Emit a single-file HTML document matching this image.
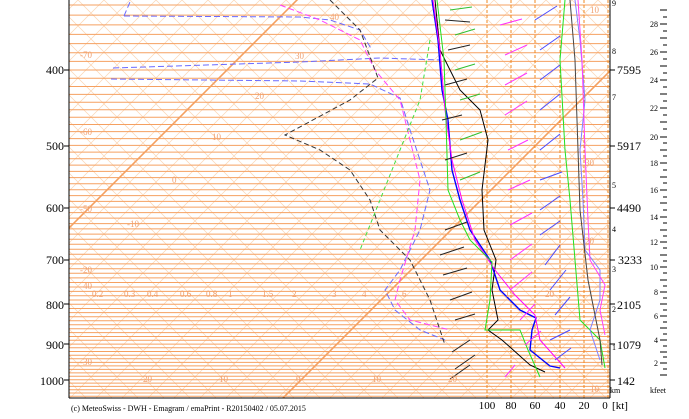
<!DOCTYPE html><html><head><meta charset="utf-8"><style>
body{margin:0;background:#fff;width:689px;height:419px;overflow:hidden;font-family:"Liberation Serif",serif}
svg{position:absolute;left:0;top:0}
</style></head><body>
<svg width="689" height="419" viewBox="0 0 689 419">
<defs>
<clipPath id="c"><rect x="69" y="0" width="541" height="398"/></clipPath>
<pattern id="hp" patternUnits="userSpaceOnUse" width="26" height="26"><path d="M0 26L26 0M-2 2L2 -2M24 28L28 24M0 0L26 26M-2 24L2 28M24 -2L28 2" stroke="#fbd4b2" stroke-width="0.7" fill="none"/></pattern>
</defs>
<g clip-path="url(#c)">
<rect x="69" y="0" width="541" height="398" fill="url(#hp)"/>
<path stroke="#f5a060" stroke-width="1" fill="none" d="M69 5H610M69 15.1H610M69 24.9H610M69 34.4H610M69 43.6H610M69 52.7H610M69 61.4H610M69 70H610M69 78.3H610M69 86.5H610M69 94.4H610M69 102.2H610M69 109.8H610M69 117.2H610M69 124.5H610M69 131.6H610M69 138.6H610M69 145.4H610M69 152.1H610M69 158.7H610M69 165.1H610M69 171.4H610M69 177.6H610M69 183.7H610M69 189.7H610M69 195.6H610M69 201.4H610M69 207.1H610M69 212.6H610M69 218.1H610M69 223.6H610M69 228.9H610M69 234.1H610M69 239.3H610M69 244.3H610M69 249.3H610M69 254.3H610M69 259.1H610M69 263.9H610M69 268.7H610M69 273.3H610M69 277.9H610M69 282.5H610M69 287H610M69 291.4H610M69 295.7H610M69 300H610M69 304.3H610M69 308.5H610M69 312.6H610M69 316.7H610M69 320.8H610M69 324.8H610M69 328.7H610M69 332.6H610M69 336.5H610M69 340.3H610M69 344.1H610M69 347.8H610M69 351.5H610M69 355.2H610M69 358.8H610M69 362.4H610M69 365.9H610M69 369.4H610M69 372.9H610M69 376.3H610M69 379.7H610M69 383.1H610M69 386.4H610M69 389.7H610M69 393H610M69 396.2H610"/>
<g fill="none" stroke-width="1">
<line x1="-10" y1="307" x2="307" y2="-10" stroke="#f4a060" stroke-width="1.6"/>
<line x1="283" y1="398" x2="681" y2="0" stroke="#f4a060" stroke-width="1.6"/>
<g stroke="#f08a20" stroke-dasharray="3,2"><line x1="487" y1="0" x2="487" y2="398"/><line x1="511" y1="0" x2="511" y2="398"/><line x1="535" y1="0" x2="535" y2="398"/><line x1="560" y1="0" x2="560" y2="398"/><line x1="584" y1="0" x2="584" y2="398"/><line x1="608" y1="0" x2="608" y2="398"/></g>
<polyline stroke="#6a6aff" stroke-dasharray="6,3" points="124,16 130,2"/>
<polyline stroke="#6a6aff" stroke-dasharray="6,3" points="124,16 300,17 330,20 360,30 372,50"/>
<polyline stroke="#6a6aff" stroke-dasharray="6,3" points="113,68 300,62 380,58 440,60"/>
<polyline stroke="#6a6aff" stroke-dasharray="6,3" points="111,79 300,81 370,84 400,98 410,130 420,160 430,190 420,230 400,270 385,290 395,310 420,330 445,340"/>
<polyline stroke="#ff40ff" stroke-dasharray="6,3" points="280,5 320,20 360,40 375,70 400,100 410,140 420,180 415,230 400,280 395,300 410,320 450,330"/>
<polyline stroke="#333" stroke-dasharray="5,3" points="330,0 360,30 378,78 350,100 285,135 320,150 350,170 370,200 380,230 410,260 430,300 445,345"/>
<polyline stroke="#40e040" stroke-dasharray="4,3" points="430,40 420,100 380,200 360,250"/>
<polyline stroke="#000" points="435,0 440,50 460,90 480,110 488,140 482,190 484,230 496,260 492,290 498,320 488,330 502,340 530,365 545,372"/>
<polyline stroke="#0000ff" stroke-width="1.4" points="432,0 438,40 442,90 448,120 452,170 460,200 470,230 490,260 500,290 520,310 536,318 532,330 530,350 550,366 560,368"/>
<polyline stroke="#ff00ff" points="433,0 440,50 445,110 452,160 462,200 475,240 495,270 515,295 535,315 540,340 565,368"/>
<polyline stroke="#20e020" points="437,0 444,60 446,120 448,190 460,220 470,240 492,262 490,300 485,330 520,330 528,350 540,377"/>
<polyline stroke="#20e020" points="565,0 560,60 565,150 570,200 575,260 580,320 600,340 605,368"/>
<polyline stroke="#8080ff" points="575,0 580,40 585,100 580,150 583,200 585,250 600,270 600,300 590,330 600,360"/>
<polyline stroke="#ff40ff" points="578,0 582,60 585,150 588,220 590,260 605,285 600,310 605,335"/>
<polyline stroke="#444" points="570,0 575,60 578,150 580,210 588,280 600,340 602,365"/>
</g>
<g stroke-width="1" fill="none">
<g stroke="#222"><path d="M445 20l25 2M448 50l22-5M445 85l22-6M442 120l20-5M445 160l22-7M445 230l22-8M440 255l24-8M443 275l24-7M450 300l22-8M455 320l20-6M470 340l-18 12M475 355l-20 14M470 365l-20 14"/></g>
<g stroke="#30c030"><path d="M450 10l22-3M455 35l20-6M455 70l20-6M460 100l20-6M460 140l22-8M460 180l20-8"/></g>
<g stroke="#ff30ff"><path d="M500 25l22-6M505 55l22-10M505 85l22-12M505 115l22-14M508 150l20-10M508 190l22-10M510 225l22-12M510 260l22-16M510 290l22-18M520 320l15-16M525 345l16-14M515 365l-10 12"/></g>
<g stroke="#4a4aff"><path d="M535 20l22-14M540 50l20-14M540 80l20-15M540 110l20-16M540 150l20-16M540 180l22-8M540 210l20-14M540 235l20-14M545 265l15-20M550 290l16-20M555 315l15-18M550 340l20-10M555 360l16-12"/></g>
</g>
</g>
<line x1="69" y1="0" x2="69" y2="398" stroke="#000"/>
<line x1="69" y1="398" x2="610" y2="398" stroke="#000"/>
<line x1="610" y1="0" x2="610" y2="398" stroke="#000"/>
<g font-size="12" text-anchor="end" fill="#000">
<text x="64" y="74">400</text><text x="64" y="150">500</text><text x="64" y="212">600</text><text x="64" y="264">700</text><text x="64" y="309">800</text><text x="64" y="349">900</text><text x="64" y="385">1000</text>
</g>
<g stroke="#000"><line x1="64" y1="70" x2="69" y2="70"/><line x1="64" y1="146" x2="69" y2="146"/><line x1="64" y1="208" x2="69" y2="208"/><line x1="64" y1="260" x2="69" y2="260"/><line x1="64" y1="304" x2="69" y2="304"/><line x1="64" y1="344" x2="69" y2="344"/><line x1="64" y1="380" x2="69" y2="380"/>
<path d="M610 70h5M610 146h5M610 208h5M610 260h5M610 304h5M610 344h5M610 380h5"/></g>
<g font-size="12" fill="#000">
<text x="617" y="74">7595</text><text x="617" y="150">5917</text><text x="617" y="212">4490</text><text x="618" y="264">3233</text><text x="617" y="309">2105</text><text x="617" y="349">1079</text><text x="617" y="385">142</text>
</g>
<g font-size="8" fill="#000"><text x="612" y="6">9</text><text x="612" y="54">8</text><text x="612" y="100">7</text><text x="612" y="188">5</text><text x="612" y="232">4</text><text x="612" y="272">3</text><text x="612" y="312">2</text><text x="612" y="350">1</text><text x="610" y="393">km</text><text x="650" y="393">kfeet</text></g>
<g font-size="8" fill="#000" text-anchor="end"><text x="658" y="27">28</text><text x="658" y="55">26</text><text x="658" y="83">24</text><text x="658" y="111">22</text><text x="658" y="140">20</text><text x="658" y="166">18</text><text x="658" y="193">16</text><text x="658" y="220">14</text><text x="658" y="245">12</text><text x="658" y="270">10</text><text x="658" y="295">8</text><text x="658" y="319">6</text><text x="658" y="343">4</text><text x="658" y="366">2</text></g>
<path stroke="#000" fill="none" d="M660 10h7M663 17h4M660 24h7M663 31h4M660 38h7M663 45h4M660 52h7M663 59h4M660 66h7M663 73h4M660 80h7M663 87h4M660 94h7M663 101h4M660 108h7M663 115h4M660 122h7M663 129h4M660 137h7M663 143h4M660 150h7M663 156h4M660 163h7M663 170h4M660 177h7M663 183h4M660 190h7M663 197h4M660 203h7M663 210h4M660 217h7M663 223h4M660 230h7M663 236h4M660 242h7M663 248h4M660 255h7M663 261h4M660 267h7M663 273h4M660 280h7M663 286h4M660 292h7M663 298h4M660 304h7M663 310h4M660 316h7M663 322h4M660 328h7M663 334h4M660 340h7M663 346h4M660 352h7M663 357h4M660 363h7M663 369h4M660 375h7"/>
<g font-size="11" fill="#000" text-anchor="middle"><text x="487" y="409">100</text><text x="511" y="409">80</text><text x="535" y="409">60</text><text x="560" y="409">40</text><text x="584" y="409">20</text><text x="605" y="409">0</text><text x="620" y="409">[kt]</text></g>
<text x="71" y="411" font-size="8" fill="#000">(c) MeteoSwiss - DWH - Emagram  /  emaPrint - R20150402 /  05.07.2015</text>
<g font-size="9" fill="#f0a070"><text x="80" y="58">-70</text><text x="80" y="135">-60</text><text x="80" y="212">-50</text><text x="80" y="273">-20</text><text x="80" y="289">-40</text><text x="80" y="365">-30</text><text x="92" y="297">0.2</text><text x="124" y="297">0.3</text><text x="147" y="297">0.4</text><text x="180" y="297">0.6</text><text x="206" y="297">0.8</text><text x="228" y="297">1</text><text x="262" y="297">1.5</text><text x="292" y="297">2</text><text x="332" y="297">3</text><text x="362" y="297">4</text><text x="402" y="297">6</text><text x="140" y="382">-20</text><text x="216" y="382">-10</text><text x="296" y="382">0</text><text x="372" y="382">10</text><text x="448" y="382">20</text><text x="255" y="99">20</text><text x="295" y="59">30</text><text x="212" y="140">10</text><text x="172" y="183">0</text><text x="127" y="227">-10</text><text x="330" y="20">40</text><text x="545" y="297">20</text><text x="505" y="297">15</text><text x="585" y="244">20</text><text x="585" y="166">30</text><text x="590" y="13">10</text><text x="590" y="392">10</text></g>
</svg>
</body></html>
